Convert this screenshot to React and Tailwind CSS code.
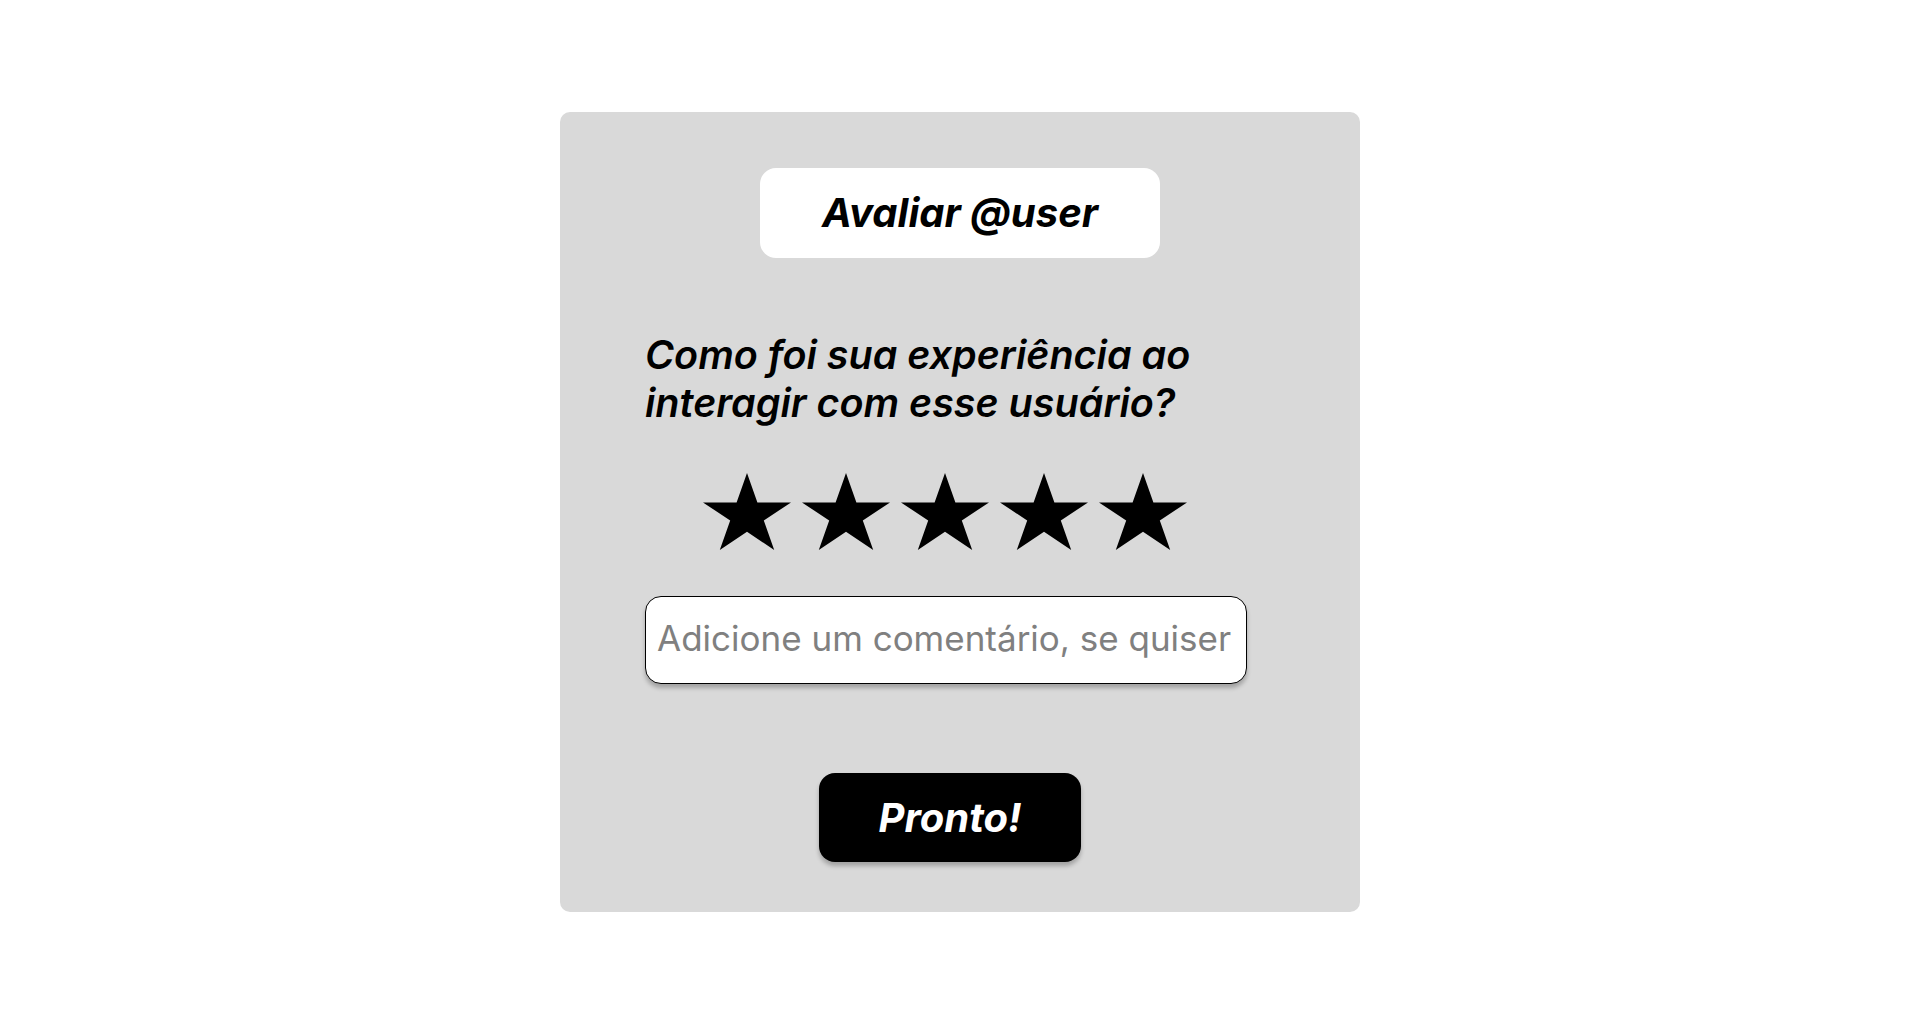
import { useState } from "react";

function Star() {
    return (
        <svg
            width="88"
            height="77"
            viewBox="0 0 95.1 90.45"
            preserveAspectRatio="none"
            className="shrink-0"
        >
            <polygon
                points="47.55,0 58.78,34.55 95.1,34.55 65.71,55.9 76.94,90.45 47.55,69.1 18.16,90.45 29.39,55.9 0,34.55 36.32,34.55"
                fill="#000"
            />
        </svg>
    );
}

export default function App() {
    const [comment, setComment] = useState("");

    return (
        <div className="w-full min-h-[1024px] bg-white font-['Inter',sans-serif] flex justify-center pt-[112px]">
            <div className="w-[800px] h-[800px] bg-[#d9d9d9] rounded-[10px] flex flex-col items-center pt-[56px]">
                <div className="w-[400px] h-[90px] bg-white rounded-[16px] flex items-center justify-center">
                    <span className="text-[40px] font-bold italic text-black leading-none">
                        Avaliar @user
                    </span>
                </div>

                <div className="w-[602px] ml-[-28px] flex flex-col mt-[73px]">
                    <p className="text-[39.5px] leading-[48px] font-semibold italic text-black whitespace-nowrap">
                        Como foi sua experiência ao
                        <br />
                        interagir com esse usuário?
                    </p>

                    <div className="flex gap-[11px] ml-[58px] mt-[46px]">
                        <Star />
                        <Star />
                        <Star />
                        <Star />
                        <Star />
                    </div>

                    <input
                        value={comment}
                        onChange={(e) => setComment(e.target.value)}
                        placeholder="Adicione um comentário, se quiser"
                        className="mt-[46px] w-[602px] h-[88px] bg-white border border-black rounded-[16px] px-[11px] pb-[4px] text-[35px] text-black placeholder:text-[#808080] shadow-[0_4px_4px_rgba(0,0,0,0.25)] outline-none"
                    />

                    <button className="mt-[89px] ml-[174px] w-[262px] h-[89px] bg-black rounded-[16px] shadow-[0_4px_4px_rgba(0,0,0,0.25)] flex items-center justify-center">
                        <span className="text-[40px] font-bold italic text-white leading-none">
                            Pronto!
                        </span>
                    </button>
                </div>
            </div>
        </div>
    );
}
